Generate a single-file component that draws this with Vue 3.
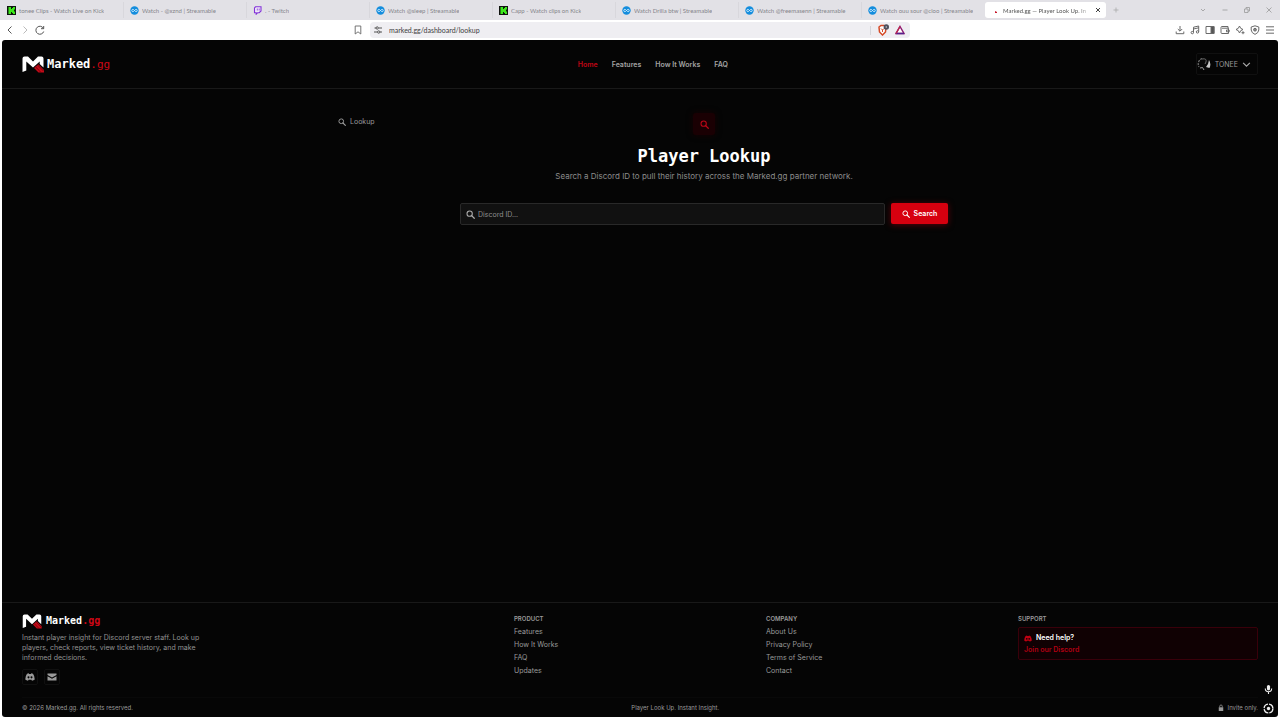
<script setup>
import { ref } from 'vue'

const query = ref('')
const tabs = [
  { icon: 'kick', title: 'tonee Clips - Watch Live on Kick' },
  { icon: 'stream', title: 'Watch - @xznd | Streamable' },
  { icon: 'twitch', title: '. - Twitch' },
  { icon: 'stream', title: 'Watch @sleep | Streamable' },
  { icon: 'kick', title: 'Capp - Watch clips on Kick' },
  { icon: 'stream', title: 'Watch Drilla btw | Streamable' },
  { icon: 'stream', title: 'Watch @freemasenn | Streamable' },
  { icon: 'stream', title: 'Watch ouu sour @cloo | Streamable' },
]
const nav = ['Home', 'Features', 'How It Works', 'FAQ']
const columns = [
  { title: 'PRODUCT', links: ['Features', 'How It Works', 'FAQ', 'Updates'] },
  { title: 'COMPANY', links: ['About Us', 'Privacy Policy', 'Terms of Service', 'Contact'] },
]
</script>

<template>
  <svg class="defs" aria-hidden="true">
    <symbol id="mark" viewBox="0 0 22 17">
      <path d="M0.500 16V2.500Q0.500 0.500 2.500 0.500H6L11 5.500L16 0.500H19.500Q21.500 0.500 21.500 2.500V11.500L17.700 8V5.500L11 11.500L4.300 5.500V14.500Z" fill="#fff" />
      <path d="M12 12L16.300 8.300L22 14V16.500H16.500Z" fill="#c20a18" />
      <path d="M13.300 10.500L19 16.500M15.500 9L21.500 15" stroke="#6d0009" stroke-width=".8" />
    </symbol>
    <symbol id="search" viewBox="0 0 16 16">
      <circle cx="6.500" cy="6.500" r="4.700" fill="none" stroke="currentColor" stroke-width="1.900" />
      <path d="M10 10L14.700 14.700" stroke="currentColor" stroke-width="2.200" stroke-linecap="round" />
    </symbol>
    <symbol id="discord" viewBox="0 0 20 16">
      <path fill-rule="evenodd" fill="currentColor" d="M4 1.500L7.500 0.500L8.300 2H11.700L12.500 0.500L16 1.500Q19.500 6 19.500 13Q17 15 14 15.500L12.800 13.500H7.200L6 15.500Q3 15 0.500 13Q0.500 6 4 1.500ZM7 6.500A2 2.200 0 1 0 7 10.900A2 2.200 0 1 0 7 6.500ZM13 6.500A2 2.200 0 1 0 13 10.900A2 2.200 0 1 0 13 6.500Z" />
    </symbol>
  </svg>
  <div class="window">
    <div class="tabs">
      <button v-for="(t, i) in tabs" :key="i" class="tab">
        <svg v-if="t.icon === 'kick'" class="fav" viewBox="0 0 9 9"><path fill="#101410" d="M0 0H9V9H0Z" /><path fill="#3de81b" d="M1.500 1H4V3H5V2H6V1H8V3.500H7V5.500H8V8H6V7H5V6H4V8H1.500Z" /></svg>
        <svg v-else-if="t.icon === 'stream'" class="fav" viewBox="0 0 9 9"><circle cx="4.500" cy="4.500" r="4.200" fill="#148ddd" /><path d="M4.500 4.500C3.500 3 1.800 3 1.800 4.500S3.500 6 4.500 4.500S7.200 3 7.200 4.500S5.500 6 4.500 4.500" fill="none" stroke="#d8f0ff" stroke-width=".9" /></svg>
        <svg v-else class="fav" viewBox="0 0 9 9"><path d="M2.500 .8H8V5L6.200 6.700H4.700L3.200 8.200V6.700H1.500V2Z" fill="#efe9f8" stroke="#8232d8" stroke-width="1.100" /><path d="M4.300 2.500V4.500M6.200 2.500V4.500" stroke="#8232d8" stroke-width=".8" /></svg>
        <span>{{ t.title }}</span>
      </button>
      <button class="tab active">
        <svg class="fav" viewBox="0 0 9 9"><path d="M4 5L6 6V7H4Z" fill="#c9182b" /></svg>
        <span>Marked.gg — Player Look Up. In</span>
        <svg class="x" viewBox="0 0 8 8"><path d="M2 2L6 6M6 2L2 6" stroke="#444" /></svg>
      </button>
      <button class="plus" aria-label="New tab"><svg viewBox="0 0 8 8"><path d="M4 1.500V6.500M1.500 4H6.500" stroke="#aaa" stroke-width=".8" /></svg></button>
      <div class="controls">
        <svg viewBox="0 0 8 8"><path d="M2 3L4 5L6 3" /></svg>
        <svg viewBox="0 0 8 8"><path d="M1.500 4H6.500" /></svg>
        <svg viewBox="0 0 8 8"><path d="M1.500 3H5V6.500H1.500ZM3 3V1.500H6.500V5H5" /></svg>
        <svg viewBox="0 0 8 8"><path d="M1.500 1.500L6.500 6.500M6.500 1.500L1.500 6.500" /></svg>
      </div>
    </div>
    <div class="toolbar">
      <div class="history">
        <svg viewBox="0 0 10 10"><path d="M6.500 1.500L3 5L6.500 8.500" stroke="#555" /></svg>
        <svg viewBox="0 0 10 10"><path d="M3.500 1.500L7 5L3.500 8.500" stroke="#bbb" /></svg>
        <svg viewBox="0 0 10 10"><path d="M8.500 3.500A4 4 0 1 0 8.700 6.500M8.700 1V3.700H6" stroke="#555" /></svg>
      </div>
      <div class="address">
        <svg class="bookmark" viewBox="0 0 10 10"><path d="M2.200 1H7.800V9L5 6.800L2.200 9Z" fill="none" stroke="#666" stroke-width=".9" /></svg>
        <div class="pill">
          <svg viewBox="0 0 10 10"><path d="M1.500 3H3M6 3H9M1 7H4M7 7H9" /><circle cx="4.200" cy="3" r="1.200" /><circle cx="5.700" cy="7" r="1.200" /></svg>
          <input aria-label="Address" value="marked.gg/dashboard/lookup" />
          <i class="divider"></i>
          <svg class="shield" viewBox="0 0 12 12"><path d="M2 3L4 1.500H7L9 3L8.500 8L5.500 11L2.500 8Z" fill="#fff" stroke="#d54a27" stroke-width="1.500" /><path d="M4 4.500L5.500 6L7 4.500M5.500 6V8" stroke="#d54a27" /><circle cx="9.300" cy="3" r="2.700" fill="#50515d" stroke="none" /><circle cx="9.300" cy="3" r=".8" fill="#c9c9d0" stroke="none" /></svg>
          <svg class="bat" viewBox="0 0 10 10"><path d="M5 1.500L9 8.500H1Z" fill="#fff" stroke="#8e1c73" stroke-width="1.500" /><path d="M1 8.500H9" stroke="#54208c" stroke-width="1.500" /><path d="M5 1.500L1 8.500" stroke="#c0264b" stroke-width="1.300" /></svg>
        </div>
      </div>
      <div class="tools">
        <svg viewBox="0 0 10 10"><path d="M5 1V6M2.800 4L5 6.200L7.200 4M1.200 6.500V8.700H8.800V6.500" /></svg>
        <svg viewBox="0 0 10 10"><path d="M3.500 7.500V2.200L8.700 1V6.700M3.500 4L8.700 2.800" /><circle cx="2.300" cy="7.600" r="1.200" /><circle cx="7.500" cy="6.900" r="1.200" /></svg>
        <svg viewBox="0 0 10 10"><path d="M1 1.500H9V8.500H1Z" /><path d="M6 1.500H9V8.500H6Z" fill="#555" /></svg>
        <svg viewBox="0 0 10 10"><path d="M8 3.200V1.500H2Q1 1.500 1 2.500V7.500Q1 8.500 2 8.500H8.500V3.200H2M9.200 5H6.500V6.800H9.200Z" /></svg>
        <svg viewBox="0 0 10 10"><path d="M4.500 1L5.700 3.300L8 4.500L5.700 5.700L4.500 8L3.300 5.700L1 4.500L3.300 3.300Z" /><path d="M8 6.200V9.200M6.500 7.700H9.500" /></svg>
        <svg viewBox="0 0 10 10"><path d="M5 .8L8.800 2V5Q8.500 8 5 9.400Q1.500 8 1.200 5V2Z" /><circle cx="5" cy="4.700" r="1.400" fill="#888" /></svg>
        <svg viewBox="0 0 10 10"><path d="M1 1.800H9M1 5H9M1 8.200H9" /></svg>
      </div>
    </div>

    <div class="page">
      <header>
        <a class="brand" href="#"><svg><use href="#mark" /></svg><span>Marked<em>.gg</em></span></a>
        <nav><a v-for="(n, i) in nav" :key="n" href="#" :class="{ current: i === 0 }">{{ n }}</a></nav>
        <button class="user" aria-haspopup="true">
          <svg class="avatar" viewBox="0 0 14 14"><circle cx="7" cy="7" r="6.500" fill="#080808" /><path d="M5 1.500A6 6 0 0 0 2 10" fill="none" stroke="#777" stroke-width="1.200" stroke-dasharray="2 1" /><path d="M3 11Q6 9 7 13" fill="none" stroke="#999" /><path d="M5 2Q10 1 9 5L8 7" fill="none" stroke="#666" /><path d="M12 3Q14.500 7 12.500 11L9 10L11 7Z" fill="#c7c7c7" /></svg>
          TONEE
          <svg class="chev" viewBox="0 0 8 8"><path d="M1 2.500L4 5.500L7 2.500" fill="none" stroke="#aaa" stroke-width="1" /></svg>
        </button>
      </header>

      <main>
        <aside><a href="#"><svg><use href="#search" /></svg>Lookup</a></aside>
        <section>
          <div class="badge"><svg><use href="#search" /></svg></div>
          <h1>Player Lookup</h1>
          <p>Search a Discord ID to pull their history across the Marked.gg partner network.</p>
          <form @submit.prevent>
            <label class="field">
              <svg><use href="#search" /></svg>
              <input v-model="query" type="text" aria-label="Discord ID" placeholder="Discord ID..." />
            </label>
            <button type="submit"><svg><use href="#search" /></svg>Search</button>
          </form>
        </section>
      </main>

      <footer>
        <div class="grid">
          <div>
            <a class="brand small" href="#"><svg><use href="#mark" /></svg><span>Marked<em>.gg</em></span></a>
            <p class="about">Instant player insight for Discord server staff. Look up players, check reports, view ticket history, and make informed decisions.</p>
            <div class="social">
              <a href="#" aria-label="Discord"><svg><use href="#discord" /></svg></a>
              <a href="#" aria-label="Email"><svg viewBox="0 0 20 16"><path d="M1 1H19V4L10 9L1 4ZM1 6.500L10 11.500L19 6.500V15H1Z" fill="currentColor" /></svg></a>
            </div>
          </div>
          <div v-for="c in columns" :key="c.title">
            <h2>{{ c.title }}</h2>
            <ul><li v-for="l in c.links" :key="l"><a href="#">{{ l }}</a></li></ul>
          </div>
          <div>
            <h2>SUPPORT</h2>
            <div class="help">
              <strong><svg><use href="#discord" /></svg>Need help?</strong>
              <a href="#">Join our Discord</a>
            </div>
          </div>
        </div>
        <div class="legal">
          <span>© 2026 Marked.gg. All rights reserved.</span>
          <span>Player Look Up. Instant Insight.</span>
          <span class="invite"><svg viewBox="0 0 8 10"><path d="M1 4H7V9H1Z" fill="#999" /><path d="M2.300 4V2.500Q2.300 1 4 1T5.700 2.500V4" fill="none" stroke="#999" /></svg>Invite only.</span>
        </div>
      </footer>
      <div class="overlay">
        <svg viewBox="0 0 10 12"><rect x="3.300" y="1" width="3.400" height="6" rx="1.700" fill="#eee" /><path d="M1.500 5Q1.500 8.500 5 8.500T8.500 5M5 8.500V11" fill="none" stroke="#eee" stroke-width="1.200" /></svg>
        <svg viewBox="0 0 10 10"><circle cx="5" cy="5" r="4" fill="none" stroke="#eee" stroke-width="1.200" stroke-dasharray="5.300 1" /><circle cx="5" cy="5" r="1.500" fill="#eee" /></svg>
      </div>
    </div>
  </div>
</template>

<style>
body { margin: 0; background: #fff; }
</style>

<style scoped>
* { box-sizing: border-box; }
a { color: inherit; text-decoration: none; }
button, input { font: inherit; color: inherit; background: none; border: 0; padding: 0; margin: 0; outline: 0; }
svg { display: block; flex: none; }
p, h1, h2, ul { margin: 0; padding: 0; list-style: none; }
.defs { position: absolute; width: 0; height: 0; }
.window { min-height: 100vh; display: flex; flex-direction: column; padding-bottom: 3px; font-family: Inter, sans-serif; font-size: 7px; }

.tabs { height: 20px; display: flex; align-items: center; background: #e2e1e6; font-family: Lato, sans-serif; font-size: 6px; color: #85858b; }
.tab { flex: 0 1 123px; min-width: 0; height: 16px; display: flex; align-items: center; gap: 3px; padding: 0 5px 0 7px; white-space: nowrap; }
.tab + .tab:not(.active) { border-left: 1px solid #d8d7dc; padding-left: 6px; }
.tab span { overflow: hidden; }
.fav { width: 9px; height: 9px; }
.tab.active { flex-basis: 121px; background: #fff; border-radius: 3px; color: #555; padding: 0 4px 0 6px; margin-left: 1px; }
.active span { flex: 1; text-align: left; mask-image: linear-gradient(90deg, #000 85%, transparent); }
.x { width: 8px; height: 8px; }
.plus { margin-left: 6px; }
.plus svg { width: 8px; height: 8px; }
.controls { margin-left: auto; display: flex; gap: 14px; padding-right: 7px; }
.controls svg { width: 8px; height: 8px; fill: none; stroke: #999; stroke-width: .8; }

.toolbar { height: 20px; display: grid; grid-template-columns: 1fr 556px 1fr; align-items: center; background: #fff; }
.history, .tools { display: flex; gap: 5px; padding: 0 5px; }
.history svg, .tools svg { width: 10px; height: 10px; fill: none; stroke: #6a6a6a; }
.tools { justify-content: flex-end; }
.address { display: flex; align-items: center; gap: 7px; padding-right: 8px; margin-left: -9px; }
.bookmark { width: 10px; height: 10px; }
.pill { flex: 1; height: 16px; display: flex; align-items: center; gap: 6px; padding: 0 5px 0 3px; background: #efeef2; border-radius: 4px; font-family: Lato, sans-serif; font-size: 7px; color: #3c3c40; }
.pill svg { width: 10px; height: 10px; fill: none; stroke: #555; }
.pill input { flex: 1; min-width: 0; }
.pill .shield { width: 12px; height: 12px; }
.divider { width: 1px; height: 9px; background: #d5d5da; }

.page { flex: 1; display: flex; flex-direction: column; margin: 0 2px; position: relative; overflow: hidden; border-radius: 3px; background: #050505; color: #9a9a9a; }
header { height: 49px; display: flex; align-items: center; justify-content: space-between; padding: 0 20px; border-bottom: 1px solid #191919; }
.brand { display: flex; align-items: center; gap: 3px; color: #fff; font: bold 12px/16px "DejaVu Sans Mono", monospace; }
.brand svg { width: 22px; height: 17px; }
.brand em { color: #cd0715; font-style: normal; font-weight: 400; font-size: 11px; }
.small { font-size: 10px; gap: 4px; }
.small svg { width: 20px; height: 15px; }
.small em { font-weight: 700; font-size: 10px; }
nav { display: flex; gap: 14px; font-weight: 600; color: #a3a3a3; }
.current { color: #c00615; }
.user { display: flex; align-items: center; gap: 4px; height: 22px; padding: 0 6px 0 0; border: 1px solid #101010; border-radius: 2px; }
.avatar { width: 14px; height: 14px; }
.chev { width: 9px; height: 9px; }

main { flex: 1; width: 100%; max-width: 616px; margin: 0 auto; padding-top: 24px; display: flex; gap: 8px; }
aside { width: 120px; }
aside a { display: flex; align-items: center; gap: 4px; height: 17px; padding-left: 6px; }
aside svg { width: 8px; height: 8px; }
section { flex: 1; display: flex; flex-direction: column; align-items: center; }
.badge { width: 22px; height: 22px; display: grid; place-items: center; border-radius: 3px; background: #1a0003; color: #bb0617; box-shadow: 0 0 6px #180003; }
.badge svg { width: 9px; height: 9px; }
h1 { margin-top: 9px; color: #fff; font: bold 17px/24px "DejaVu Sans Mono", monospace; }
section p { margin-top: 1px; font-size: 8px; line-height: 14px; color: #8c8c8c; }
form { width: 100%; display: flex; gap: 6px; margin-top: 20px; }
form svg { width: 8px; height: 8px; }
.field { flex: 1; height: 22px; display: flex; align-items: center; gap: 3px; padding: 0 5px; border: 1px solid #292929; border-radius: 2px; background: #111; color: #aaa; }
.field svg { width: 9px; height: 9px; }
.field input { flex: 1; }
.field input::placeholder { color: #8f8f8f; opacity: 1; }
form button { height: 21px; display: flex; align-items: center; justify-content: center; gap: 4px; width: 57px; border-radius: 2px; background: #d7000f; color: #fff; font-weight: 600; box-shadow: 0 1px 6px #5a0009; }

footer { border-top: 1px solid #191919; padding: 10px 20px 0; }
.grid { display: grid; grid-template-columns: 2fr 1fr 1fr 1fr; gap: 12px; }
.about { max-width: 190px; margin-top: 4px; line-height: 10px; color: #939393; }
.social { display: flex; gap: 6px; margin-top: 6px; }
.social a { width: 16px; height: 16px; display: grid; place-items: center; border: 1px solid #101010; border-radius: 2px; }
.social svg { width: 10px; height: 8px; }
h2 { font-size: 6px; line-height: 12px; font-weight: 600; }
li { line-height: 13px; }
.help { display: flex; flex-direction: column; padding: 4px 5px 3px; line-height: 12px; border: 1px solid #39000a; border-radius: 2px; background: #100103; margin-top: 2px; }
.help strong { display: flex; align-items: center; gap: 4px; color: #fff; font-weight: 600; }
.help svg { width: 8px; height: 7px; color: #c20012; }
.help a { color: #b00012; font-weight: 600; }
.legal { display: flex; justify-content: space-between; align-items: center; height: 20px; margin-top: 12px; border-top: 1px solid #090909; font-size: 6px; }
.invite { display: flex; align-items: center; gap: 4px; }
.invite svg { width: 6px; height: 8px; }
.overlay { position: absolute; right: 4px; bottom: 3px; display: flex; flex-direction: column; align-items: center; gap: 8px; }
.overlay svg { width: 11px; height: 11px; }
</style>
